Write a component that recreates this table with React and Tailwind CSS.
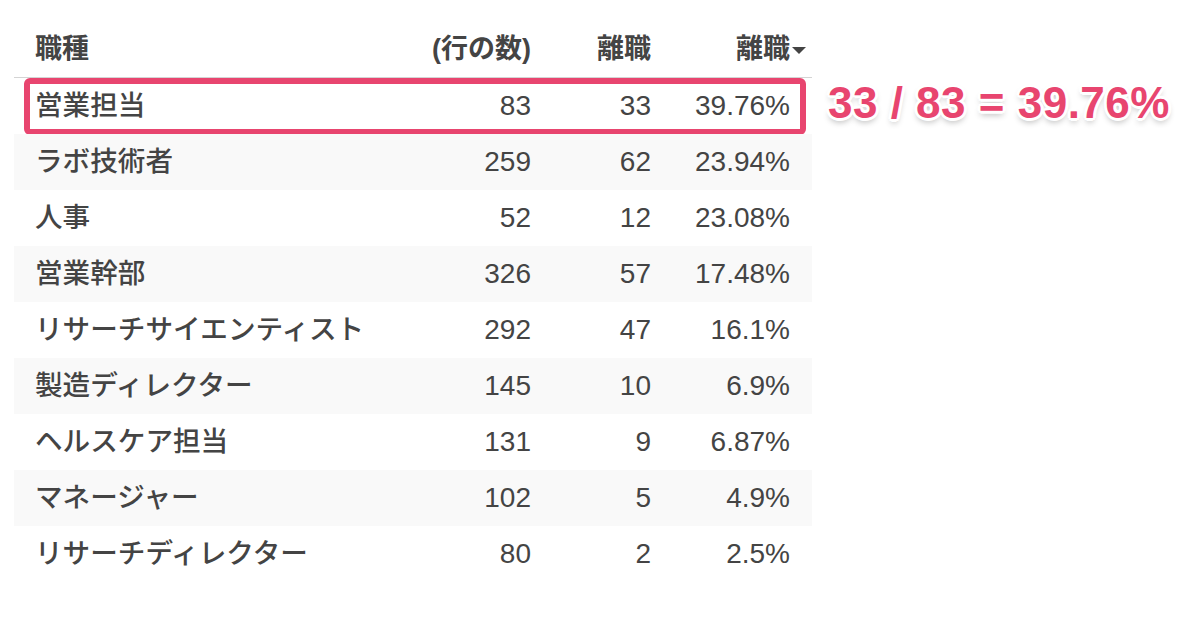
import React from "react";

const rows = [
  ["営業担当", "83", "33", "39.76%"],
  ["ラボ技術者", "259", "62", "23.94%"],
  ["人事", "52", "12", "23.08%"],
  ["営業幹部", "326", "57", "17.48%"],
  ["リサーチサイエンティスト", "292", "47", "16.1%"],
  ["製造ディレクター", "145", "10", "6.9%"],
  ["ヘルスケア担当", "131", "9", "6.87%"],
  ["マネージャー", "102", "5", "4.9%"],
  ["リサーチディレクター", "80", "2", "2.5%"],
];

const font = { fontFamily: '"Liberation Sans", "Noto Sans CJK JP", sans-serif' };

export default function App() {
  return (
    <div className="w-[1184px] h-[620px] bg-white overflow-hidden text-[#444444]" style={font}>
      <div className="flex pl-[14px] pt-[22px]">
        <div className="w-[798px] flex flex-col">
          <div className="grid grid-cols-[400px_137px_120px_141px] h-[56px] items-center border-b border-[#d4d4d4] font-bold text-[27px]">
            <div className="pl-[21px]">職種</div>
            <div className="text-right pr-[20px]">(行の数)</div>
            <div className="text-right pr-[20px]">離職</div>
            <div className="flex justify-end items-center pr-[6px]">
              <span>離職</span>
              <svg width="14" height="8" viewBox="0 0 14 8" className="ml-[2px] mt-[2px]">
                <path d="M0 0 L14 0 L7 7 Z" fill="#444444" />
              </svg>
            </div>
          </div>
          {rows.map((r, i) => (
            <div
              key={i}
              className={
                "relative grid grid-cols-[400px_137px_120px_141px] h-[56px] items-center " +
                (i % 2 === 1 ? "bg-[#f9f9f9]" : "bg-white")
              }
            >
              <div className="pl-[21px] text-[27.6px] font-medium whitespace-nowrap">{r[0]}</div>
              <div className="text-right pr-[20px] text-[28px]">{r[1]}</div>
              <div className="text-right pr-[20px] text-[28px]">{r[2]}</div>
              <div className="text-right pr-[22px] text-[28px]">{r[3]}</div>
              {i === 0 && (
                <div className="absolute left-[10px] right-[6px] top-0 bottom-[-1px] border-[6px] border-[#e8456f] rounded-[6px]" />
              )}
            </div>
          ))}
        </div>
        <div className="pt-[57px] pl-[16px]">
          <div
            className="text-[44px] font-bold text-[#e8456f] leading-[48px] whitespace-nowrap tracking-[0.5px] [text-shadow:3px_0_0_#fff,-3px_0_0_#fff,0_3px_0_#fff,0_-3px_0_#fff,2px_2px_0_#fff,-2px_-2px_0_#fff,2px_-2px_0_#fff,-2px_2px_0_#fff,0_4px_6px_rgba(0,0,0,0.3)]"
          >
            33 / 83 = 39.76%
          </div>
        </div>
      </div>
    </div>
  );
}
